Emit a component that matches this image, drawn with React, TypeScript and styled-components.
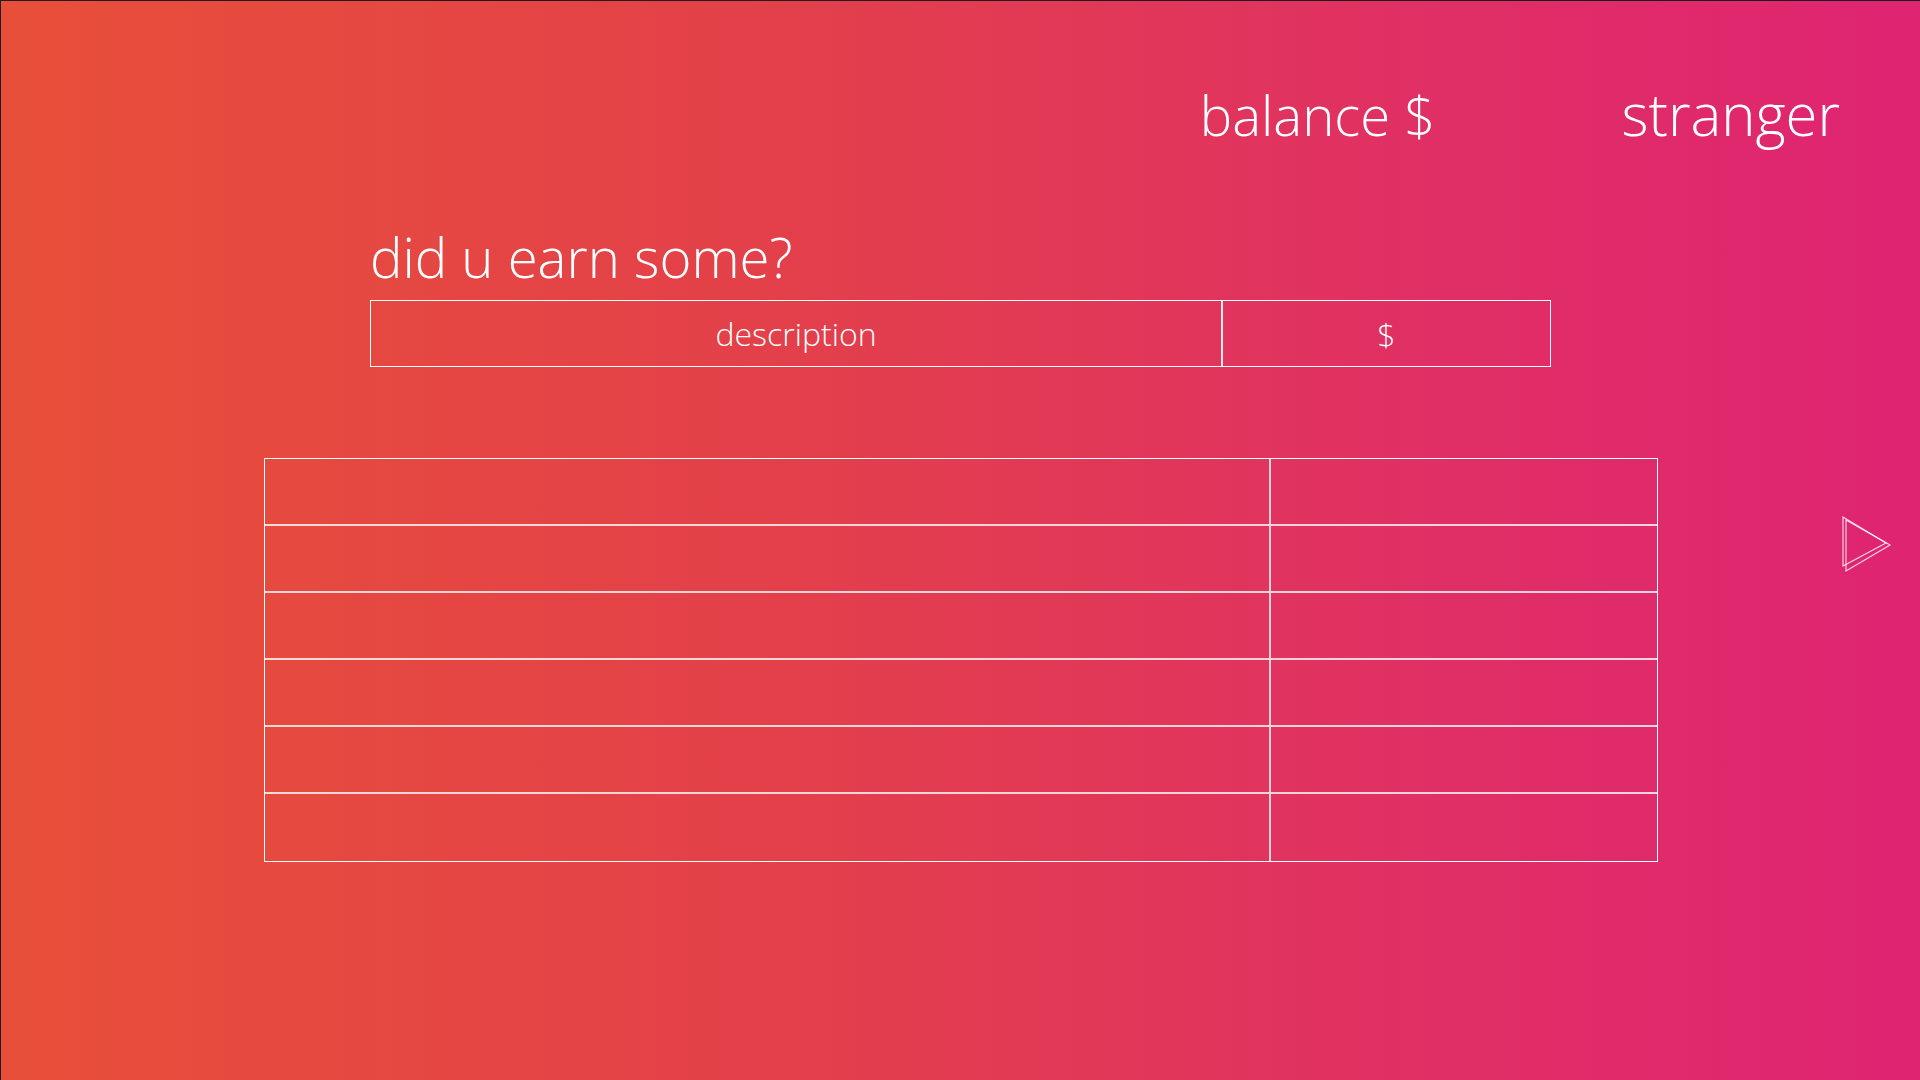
import React from "react";
import styled, { createGlobalStyle } from "styled-components";

const Global = createGlobalStyle`
  html, body { margin: 0; padding: 0; }
  body { font-family: "Open Sans", "Noto Sans", sans-serif; font-weight: 300; color: #fff; }
  * { box-sizing: border-box; }
`;

const Page = styled.div`
  position: relative;
  width: 1920px;
  height: 1080px;
  overflow: hidden;
  border-left: 1px solid #1d1d1d;
  border-top: 1px solid #1d1d1d;
  background: linear-gradient(90deg, #e84f39 0%, #e3404a 40%, #e02f65 75%, #df2472 100%);
`;

const Header = styled.header`
  display: flex;
  justify-content: flex-end;
  align-items: baseline;
  gap: 186px;
  padding: 84px 80px 0 0;
  height: 140px;
`;

const HeaderText = styled.div<{ $size: number }>`
  font-size: ${(p) => p.$size}px;
  line-height: 1;
  font-weight: 300;
  white-space: nowrap;
`;

const Form = styled.section`
  margin-left: 369px;
  margin-top: 88px;
  width: 1181px;
`;

const Heading = styled.h1`
  margin: 0 0 15px 0;
  font-size: 54.5px;
  line-height: 56px;
  font-weight: 300;
`;

const InputRow = styled.div`
  display: grid;
  grid-template-columns: 852px 1fr;
  height: 67px;
  border: 1px solid #fff;
`;

const Field = styled.input<{ $divider?: boolean }>`
  width: 100%;
  min-width: 0;
  background: transparent;
  border: none;
  border-right: ${(p) => (p.$divider ? "2px solid rgba(255,255,255,0.9)" : "none")};
  color: #fff;
  font-family: inherit;
  font-weight: 300;
  font-size: 32px;
  text-align: center;
  outline: none;
  padding: 0;
  &::placeholder { color: #fff; opacity: 1; }
`;

const Table = styled.div`
  margin: 91px 0 0 263px;
  width: 1394px;
  border: 1px solid #fff;
  display: grid;
  grid-template-columns: 1006px 1fr;
  grid-auto-rows: 67px;
`;

const Cell = styled.div<{ $first?: boolean; $last?: boolean }>`
  border-bottom: ${(p) => (p.$last ? "none" : "2px solid rgba(255,255,255,0.78)")};
  border-right: ${(p) => (p.$first ? "2px solid rgba(255,255,255,0.78)" : "none")};
`;

const NextButton = styled.button`
  position: absolute;
  left: 1836px;
  top: 509px;
  width: 60px;
  height: 64px;
  padding: 0;
  background: none;
  border: none;
  cursor: pointer;
`;

export default function App() {
  const rows = [0, 1, 2, 3, 4, 5];
  return (
    <>
      <Global />
      <Page>
        <Header>
          <HeaderText $size={54.5}>balance $</HeaderText>
          <HeaderText $size={58}>stranger</HeaderText>
        </Header>
        <Form>
          <Heading>did u earn some?</Heading>
          <InputRow>
            <Field $divider placeholder="description" />
            <Field placeholder="$" />
          </InputRow>
        </Form>
        <Table>
          {rows.map((r) => (
            <React.Fragment key={r}>
              <Cell $first $last={r === rows.length - 1} />
              <Cell $last={r === rows.length - 1} />
            </React.Fragment>
          ))}
        </Table>
        <NextButton aria-label="next">
          <svg width="60" height="64" viewBox="0 0 60 64" fill="none">
            <polygon points="6,7 49,33 6,56" stroke="rgba(255,255,255,0.8)" strokeWidth="1.2" />
            <polygon points="9,10 53,35 9,61" stroke="rgba(255,255,255,0.8)" strokeWidth="1.2" />
          </svg>
        </NextButton>
      </Page>
    </>
  );
}
